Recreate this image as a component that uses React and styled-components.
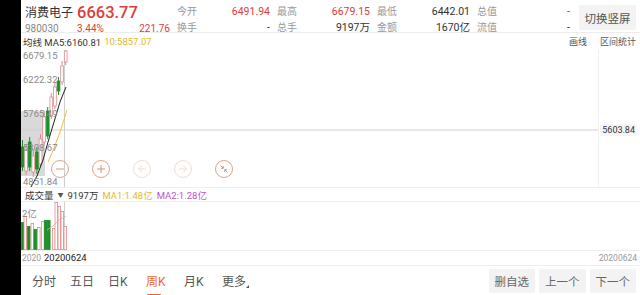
import React from 'react'
import styled, { createGlobalStyle } from 'styled-components'

const GlobalStyle = createGlobalStyle`
  html, body { margin: 0; padding: 0; background: #000; }
  body { font-family: Roboto, "Noto Sans CJK SC", sans-serif; }
`

const RED = '#de3b3b'
const GREEN = '#1f8f2b'

const Screen = styled.div`
  display: flex;
  width: 640px;
  height: 295px;
  overflow: hidden;
`

const SideStrip = styled.div`
  width: 21px;
  flex: none;
  background: #000;
`

const Panel = styled.div`
  flex: 1;
  display: flex;
  flex-direction: column;
  background: #fff;
  min-width: 0;
`

const Header = styled.div`
  height: 33px;
  display: grid;
  grid-template-columns: 56px 100px repeat(4, 100px) 1fr;
  grid-template-rows: 1fr 1fr;
  align-items: center;
  border-bottom: 1px solid #ececec;
  padding-top: 1px;
  box-sizing: border-box;
`

const Name = styled.div`
  padding-left: 4px;
  font-size: 12px;
  color: #333;
  line-height: 14px;
  padding-top: 3px;
`

const Code = styled.div`
  padding-left: 4px;
  font-size: 10px;
  color: #888;
`

const BigPrice = styled.div`
  font-size: 16.5px;
  font-weight: 500;
  color: ${RED};
  line-height: 18px;
  padding-top: 3px;
`

const ChangeRow = styled.div`
  display: flex;
  justify-content: space-between;
  padding-right: 7px;
  font-size: 10px;
  color: ${RED};
`

const Stat = styled.div`
  display: flex;
  justify-content: space-between;
  padding-right: 7px;
  font-size: 10px;
  line-height: 12px;
`

const StatLabel = styled.span`
  color: #999;
`

const StatValue = styled.span`
  color: ${p => p.$color || '#333'};
  font-size: 10.5px;
`

const SwitchButton = styled.div`
  grid-row: 1 / span 2;
  grid-column: 7;
  justify-self: end;
  margin-right: 4px;
  width: 57px;
  height: 25px;
  background: #f3f3f3;
  border-radius: 2px;
  color: #555;
  font-size: 11.5px;
  display: flex;
  align-items: center;
  justify-content: center;
`

const Toolbar = styled.div`
  height: 17px;
  display: flex;
  align-items: center;
  padding: 0 4px 0 2px;
  font-size: 9.5px;
  color: #333;
  gap: 3px;
`

const Yellow = styled.span`
  color: #e8b923;
`

const Purple = styled.span`
  color: #c04fd3;
`

const ToolLinks = styled.div`
  margin-left: auto;
  display: flex;
  gap: 13px;
  font-size: 9px;
  color: #555;
`

const ChartBox = styled.div`
  position: relative;
  height: 137px;
`

const PriceLabel = styled.div`
  position: absolute;
  left: 2px;
  top: ${p => p.$top}px;
  font-size: 9.5px;
  line-height: 10px;
  color: #888;
`

const CrossLabel = styled.div`
  position: absolute;
  right: 3px;
  top: 74px;
  padding: 1px 2px;
  background: #f5f5f5;
  font-size: 9px;
  color: #333;
`

const ZoomBar = styled.div`
  position: absolute;
  left: 30px;
  top: 110px;
  display: flex;
  gap: 23px;
`

const CircleBtn = styled.div`
  width: 16px;
  height: 16px;
  border-radius: 50%;
  border: 1px solid ${p => (p.$faded ? '#f1ddd0' : '#dca587')};
  color: ${p => (p.$faded ? '#f1ddd0' : '#d79874')};
  display: flex;
  align-items: center;
  justify-content: center;
`

const VolHeader = styled.div`
  height: 15px;
  display: flex;
  align-items: center;
  gap: 4px;
  padding-left: 4px;
  font-size: 9.5px;
  color: #333;
  border-top: 1px solid #efefef;
  border-bottom: 1px solid #efefef;
  box-sizing: border-box;
`

const Caret = styled.span`
  font-size: 6px;
  color: #555;
`

const VolBox = styled.div`
  position: relative;
  height: 48px;
`

const VolLabel = styled.div`
  position: absolute;
  left: 1px;
  top: 4px;
  font-size: 9.5px;
  color: #888;
`

const DateRow = styled.div`
  position: relative;
  height: 14px;
  display: flex;
  align-items: center;
  justify-content: space-between;
  padding: 0 3px 0 1px;
  font-size: 8.5px;
  color: #999;
  border-top: 1px solid #efefef;
  border-bottom: 1px solid #efefef;
`

const DateTag = styled.span`
  position: absolute;
  left: 22px;
  top: 1px;
  background: #fff;
  color: #222;
  font-size: 9.5px;
  padding: 0 1px;
`

const TabBar = styled.div`
  flex: 1;
  display: flex;
  align-items: center;
  padding-left: 11px;
`

const Tab = styled.div`
  position: relative;
  width: 38px;
  font-size: 12px;
  color: ${p => (p.$active ? '#ea6a2a' : '#555')};
  &::after {
    content: '';
    display: ${p => (p.$active ? 'block' : 'none')};
    position: absolute;
    left: 1px;
    bottom: -7px;
    width: 14px;
    height: 2px;
    border-radius: 1px;
    background: #ea6a2a;
  }
`

const MoreTab = styled(Tab)`
  &::before {
    content: '';
    position: absolute;
    left: 24px;
    bottom: 1px;
    border-left: 3px solid transparent;
    border-bottom: 3px solid #555;
  }
`

const Actions = styled.div`
  margin-left: auto;
  display: flex;
  gap: 4px;
  padding-right: 4px;
`

const ActionBtn = styled.div`
  height: 24px;
  padding: 0 6px;
  background: #f3f3f3;
  border-radius: 2px;
  color: #666;
  font-size: 11.5px;
  display: flex;
  align-items: center;
`

const candles = [
  { x: 1.5, o: 97, c: 117, h: 90, l: 121, up: false },
  { x: 5.1, o: 121, c: 100, h: 95, l: 125, up: true },
  { x: 8.7, o: 92, c: 117, h: 87, l: 121, up: false },
  { x: 12.3, o: 122, c: 106, h: 99, l: 127, up: true },
  { x: 15.9, o: 102, c: 119, h: 97, l: 124, up: false },
  { x: 19.5, o: 114, c: 89, h: 84, l: 117, up: true },
  { x: 23.1, o: 92, c: 67, h: 61, l: 95, up: true },
  { x: 26.7, o: 61, c: 86, h: 57, l: 89, up: false },
  { x: 30.3, o: 66, c: 47, h: 43, l: 69, up: true },
  { x: 33.9, o: 56, c: 37, h: 33, l: 59, up: true },
  { x: 37.5, o: 31, c: 41, h: 27, l: 45, up: false },
  { x: 41.1, o: 32, c: 16, h: 11, l: 35, up: true },
  { x: 44.7, o: 12, c: 1, h: 0, l: 15, up: true },
]

const vols = [
  { x: 0, top: 20, up: false },
  { x: 2.5, top: 14, up: true },
  { x: 6, top: 24, up: false },
  { x: 9.5, top: 21, up: true },
  { x: 12.5, top: 27, up: false },
  { x: 16, top: 25, up: true },
  { x: 20, top: 19, up: true },
  { x: 23, top: 18, up: false },
  { x: 26, top: 18, up: false },
  { x: 31, top: 26, up: true },
  { x: 33.5, top: 0, up: true },
  { x: 36.5, top: 4, up: true },
  { x: 39.5, top: 9, up: true },
  { x: 42.5, top: 24, up: true },
]

function PriceChart() {
  return (
    <svg width="619" height="137" style={{ position: 'absolute', left: 0, top: 0 }}>
      <rect x="0" y="61" width="24" height="65" fill="#d9d9d9" />
      <line x1="0" y1="80" x2="577" y2="80" stroke="#cfcfcf" strokeWidth="1" />
      <line x1="43.5" y1="0" x2="43.5" y2="137" stroke="#cfcfcf" strokeWidth="1" />
      <line x1="577.5" y1="0" x2="577.5" y2="137" stroke="#f0f0f0" strokeWidth="1" />
      {candles.map((c, i) => {
        const top = Math.min(c.o, c.c)
        const h = Math.abs(c.o - c.c)
        const col = c.up ? '#e58a8a' : GREEN
        return (
          <g key={i}>
            <line x1={c.x} y1={c.h} x2={c.x} y2={c.l} stroke={col} strokeWidth="1" />
            <rect
              x={c.x - 1.4}
              y={top}
              width="2.8"
              height={h}
              fill={c.up ? '#fff' : GREEN}
              stroke={col}
              strokeWidth="0.8"
            />
          </g>
        )
      })}
      <polyline points="10,137 16,126 22,110 27,92 33,72 39,52 45,37" fill="none" stroke="#222" strokeWidth="1" />
      <polyline points="27,112 33,98 39,82 46,60" fill="none" stroke="#f0c040" strokeWidth="1" />
    </svg>
  )
}

function VolumeChart() {
  return (
    <svg width="619" height="48" style={{ position: 'absolute', left: 0, top: 0 }}>
      <line x1="43.5" y1="0" x2="43.5" y2="48" stroke="#cfcfcf" strokeWidth="1" />
      {vols.map((v, i) => (
        <rect
          key={i}
          x={v.x + 0.5}
          y={v.top + 0.5}
          width="2.6"
          height={47 - v.top}
          fill={v.up ? '#fff' : GREEN}
          stroke={v.up ? '#e58a8a' : GREEN}
          strokeWidth="0.8"
        />
      ))}
      <polyline points="26,28 32,24 38,18 45,14" fill="none" stroke="#f0a0b0" strokeWidth="0.8" />
    </svg>
  )
}

function Icon({ kind }) {
  const common = { width: 10, height: 10, viewBox: '0 0 10 10', fill: 'none', stroke: 'currentColor', strokeWidth: 1 }
  if (kind === 'minus') return <svg {...common}><line x1="1" y1="5" x2="9" y2="5" /></svg>
  if (kind === 'plus')
    return (
      <svg {...common}>
        <line x1="1" y1="5" x2="9" y2="5" />
        <line x1="5" y1="1" x2="5" y2="9" />
      </svg>
    )
  if (kind === 'left')
    return (
      <svg {...common}>
        <polyline points="5,1.5 1.5,5 5,8.5" />
        <line x1="1.5" y1="5" x2="9" y2="5" />
      </svg>
    )
  if (kind === 'right')
    return (
      <svg {...common}>
        <polyline points="5,1.5 8.5,5 5,8.5" />
        <line x1="1" y1="5" x2="8.5" y2="5" />
      </svg>
    )
  return (
    <svg {...common}>
      <line x1="1.5" y1="1.5" x2="4.3" y2="4.3" />
      <polyline points="4.3,2 4.3,4.3 2,4.3" />
      <line x1="8.5" y1="8.5" x2="5.7" y2="5.7" />
      <polyline points="5.7,8 5.7,5.7 8,5.7" />
    </svg>
  )
}

const stats = [
  ['今开', '6491.94', RED, '换手', '-'],
  ['最高', '6679.15', RED, '总手', '9197万'],
  ['最低', '6442.01', '#333', '金额', '1670亿'],
  ['总值', '-', '#555', '流值', '-'],
]

export default function App() {
  return (
    <Screen>
      <GlobalStyle />
      <SideStrip />
      <Panel>
        <Header>
          <Name>消费电子</Name>
          <BigPrice>6663.77</BigPrice>
          {stats.map(s => (
            <Stat key={s[0]}>
              <StatLabel>{s[0]}</StatLabel>
              <StatValue $color={s[2]}>{s[1]}</StatValue>
            </Stat>
          ))}
          <SwitchButton>切换竖屏</SwitchButton>
          <Code>980030</Code>
          <ChangeRow>
            <span>3.44%</span>
            <span>221.76</span>
          </ChangeRow>
          {stats.map(s => (
            <Stat key={s[3]}>
              <StatLabel>{s[3]}</StatLabel>
              <StatValue>{s[4]}</StatValue>
            </Stat>
          ))}
        </Header>
        <Toolbar>
          <span>均线 MA5:6160.81</span>
          <Yellow>10:5857.07</Yellow>
          <ToolLinks>
            <span>画线</span>
            <span>区间统计</span>
          </ToolLinks>
        </Toolbar>
        <ChartBox>
          <PriceChart />
          <PriceLabel $top={1}>6679.15</PriceLabel>
          <PriceLabel $top={25}>6222.32</PriceLabel>
          <PriceLabel $top={59}>5765.49</PriceLabel>
          <PriceLabel $top={93}>5308.67</PriceLabel>
          <PriceLabel $top={127}>4851.84</PriceLabel>
          <CrossLabel>5603.84</CrossLabel>
          <ZoomBar>
            <CircleBtn><Icon kind="minus" /></CircleBtn>
            <CircleBtn><Icon kind="plus" /></CircleBtn>
            <CircleBtn $faded><Icon kind="left" /></CircleBtn>
            <CircleBtn $faded><Icon kind="right" /></CircleBtn>
            <CircleBtn><Icon kind="shrink" /></CircleBtn>
          </ZoomBar>
        </ChartBox>
        <VolHeader>
          <span>成交量</span>
          <Caret>▼</Caret>
          <span>9197万</span>
          <Yellow>MA1:1.48亿</Yellow>
          <Purple>MA2:1.28亿</Purple>
        </VolHeader>
        <VolBox>
          <VolumeChart />
          <VolLabel>2亿</VolLabel>
        </VolBox>
        <DateRow>
          <span>2020</span>
          <DateTag>20200624</DateTag>
          <span>20200624</span>
        </DateRow>
        <TabBar>
          <Tab>分时</Tab>
          <Tab>五日</Tab>
          <Tab>日K</Tab>
          <Tab $active>周K</Tab>
          <Tab>月K</Tab>
          <MoreTab>更多</MoreTab>
          <Actions>
            <ActionBtn>删自选</ActionBtn>
            <ActionBtn>上一个</ActionBtn>
            <ActionBtn>下一个</ActionBtn>
          </Actions>
        </TabBar>
      </Panel>
    </Screen>
  )
}
